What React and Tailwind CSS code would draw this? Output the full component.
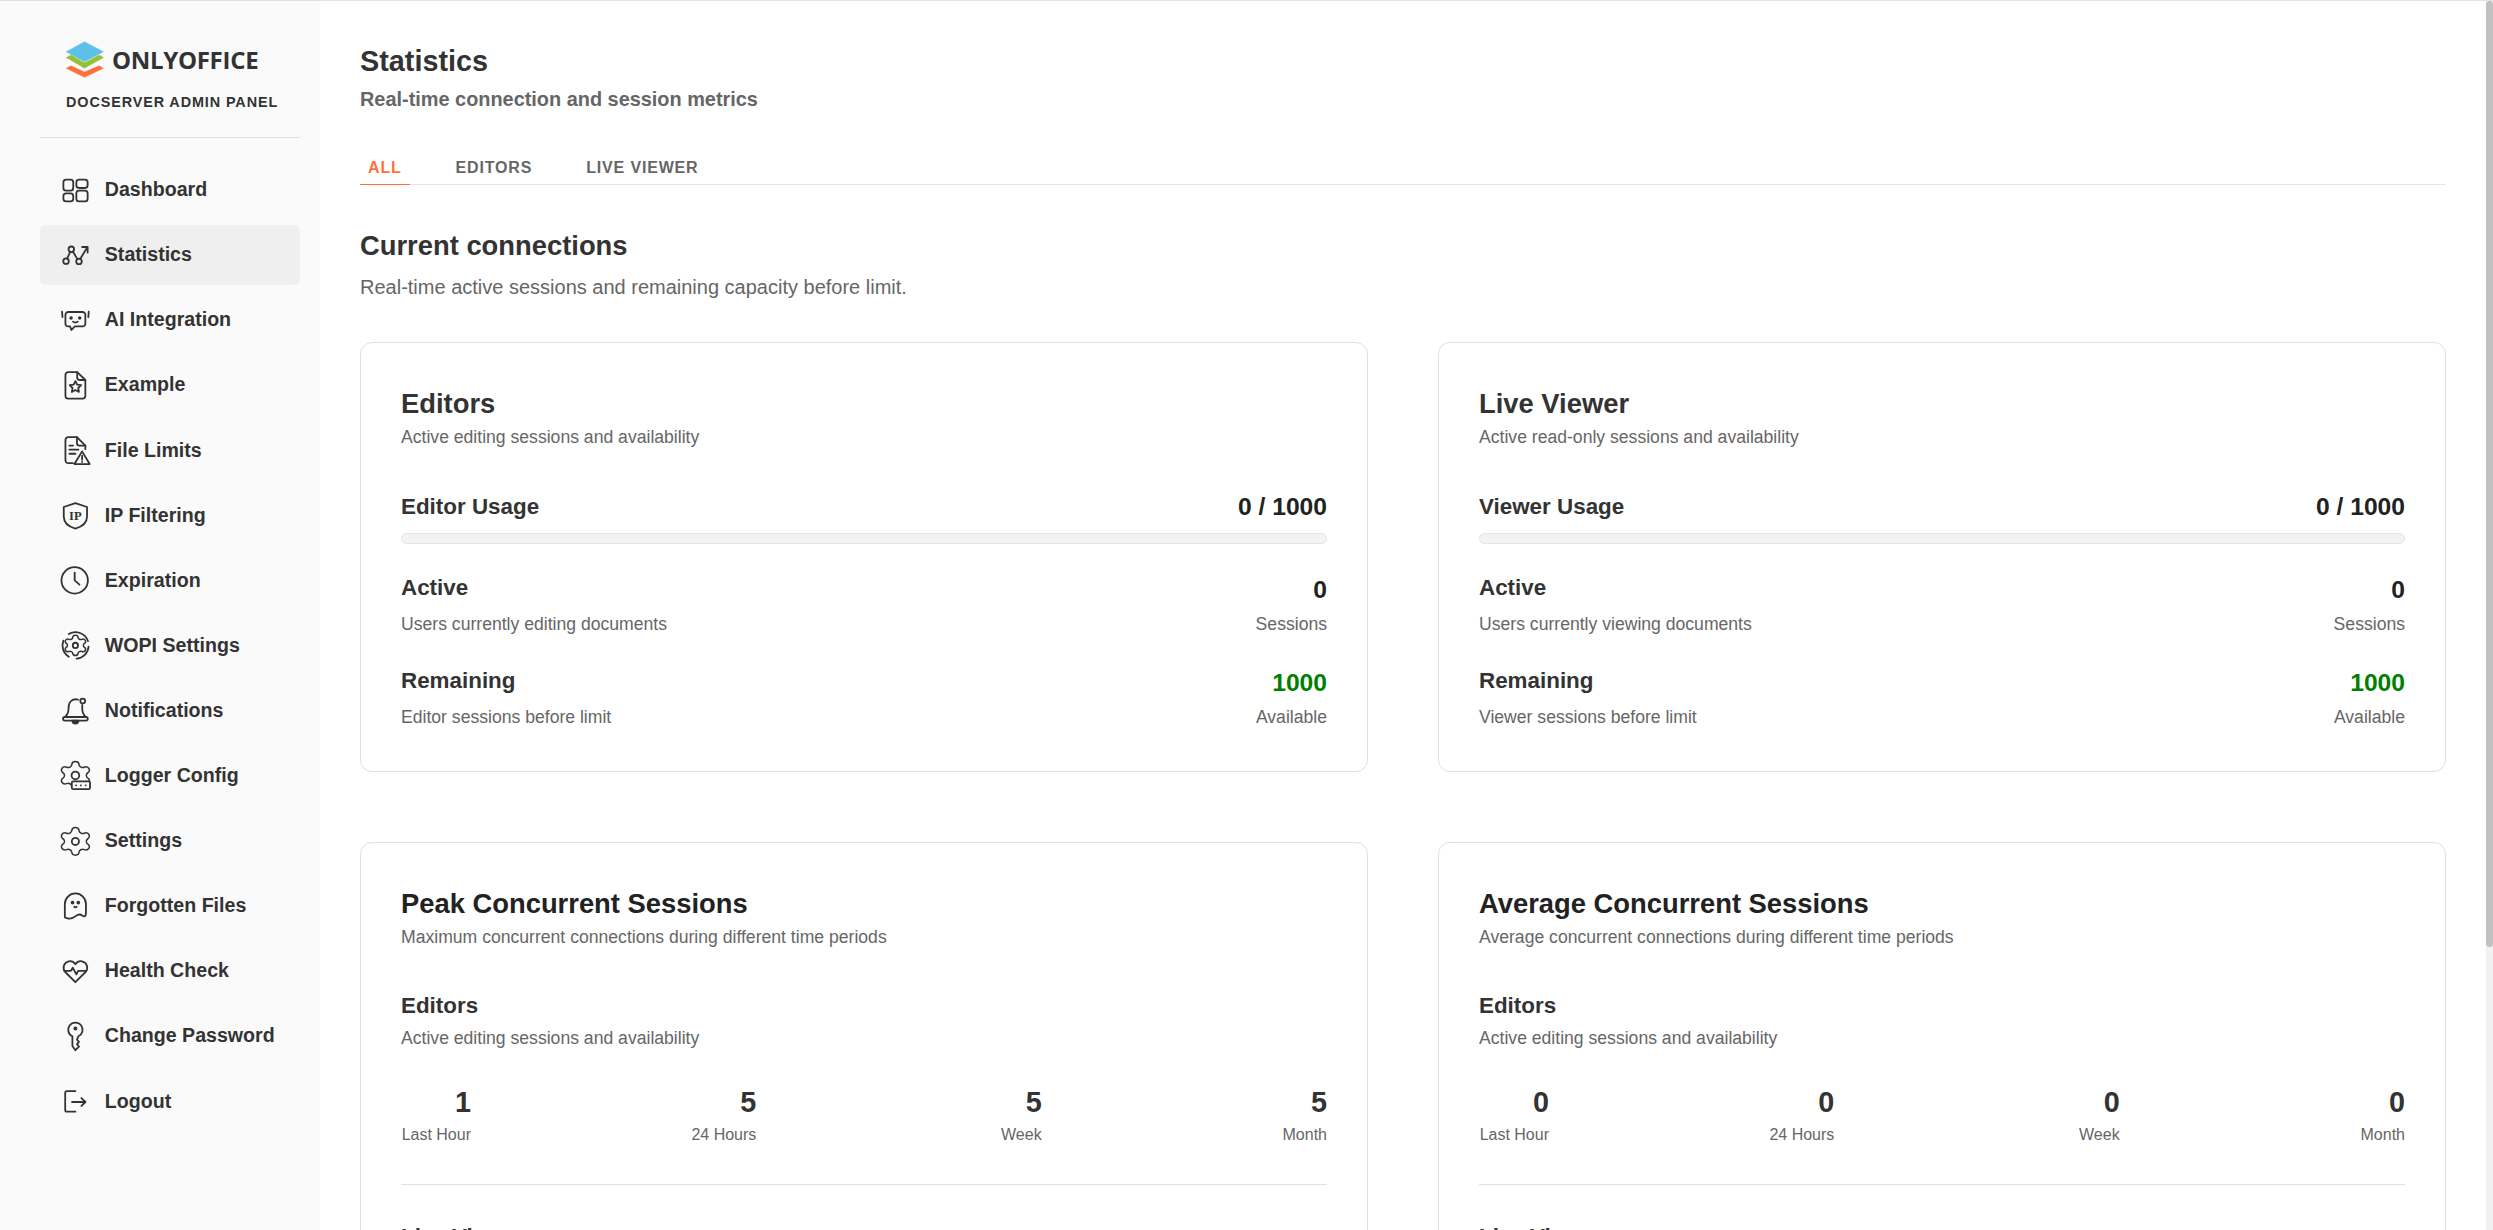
const Gear = ({ sx = 1.3, sy = 1.15, r = 3, children }) => (
    <>
        <g transform={`translate(12 12) scale(${sx} ${sy}) translate(-12 -12)`}>
            <path vectorEffect="non-scaling-stroke" d="M9.671 4.136a2.34 2.34 0 0 1 4.659 0 2.34 2.34 0 0 0 3.319 1.915 2.34 2.34 0 0 1 2.33 4.033 2.34 2.34 0 0 0 0 3.831 2.34 2.34 0 0 1-2.33 4.033 2.34 2.34 0 0 0-3.319 1.915 2.34 2.34 0 0 1-4.659 0 2.34 2.34 0 0 0-3.32-1.915 2.34 2.34 0 0 1-2.33-4.033 2.34 2.34 0 0 0 0-3.831A2.34 2.34 0 0 1 6.35 6.051a2.34 2.34 0 0 0 3.319-1.915" />
        </g>
        <circle cx="12" cy="12" r={r} />
        {children}
    </>
)

const icons = {
    dashboard: (
        <>
            <rect x="2" y="3" width="8.2" height="9.2" rx="2.2" />
            <rect x="12.8" y="3" width="9.4" height="7" rx="2.2" />
            <rect x="2" y="14.4" width="8.2" height="6.8" rx="2.2" />
            <rect x="12.8" y="12.2" width="9.4" height="9" rx="2.2" />
        </>
    ),
    statistics: (
        <>
            <circle cx="4.2" cy="16.8" r="2.3" />
            <circle cx="8.6" cy="6.9" r="2.3" />
            <circle cx="15" cy="17" r="2.3" />
            <path d="M5.1 14.7l2.6-5.7M9.9 8.8l3.8 6.3M16 15l5.8-9.6M17.6 5h4.6v4.6" />
        </>
    ),
    ai: (
        <>
            <path d="M6 5h12a2.3 2.3 0 0 1 2.3 2.3v7.4A2.3 2.3 0 0 1 18 17h-6.5l-2.8 3-1.2-3H6a2.3 2.3 0 0 1-2.3-2.3V7.3A2.3 2.3 0 0 1 6 5z" />
            <path d="M.9 4.8l.3 4.4M23.1 4.8l-.3 4.4M10 13q2 1.5 4 0" />
            <circle cx="8.4" cy="10" r=".7" fill="#333" />
            <circle cx="15.6" cy="10" r=".7" fill="#333" />
        </>
    ),
    example: (
        <>
            <path d="M13.5 1H6a2.3 2.3 0 0 0-2.3 2.3v17.4A2.3 2.3 0 0 0 6 23h12a2.3 2.3 0 0 0 2.3-2.3V7.5z" />
            <path d="M13.5 1v4.5a2 2 0 0 0 2 2h4.8" />
            <path d="M12 8.4l1.47 2.98 3.29.47-2.38 2.32.56 3.28L12 15.9l-2.94 1.55.56-3.28-2.38-2.32 3.29-.47z" />
        </>
    ),
    file: (
        <>
            <path d="M10 22.6H6a2.3 2.3 0 0 1-2.3-2.3v-17A2.3 2.3 0 0 1 6 1h7.3l7 7v3" />
            <path d="M13.3 1v5a2 2 0 0 0 2 2h5M7 8h3M7 11.4h7.5M7 14.8h5" />
            <path d="M17.6 12.8l6.3 10.6H11.2z" />
            <path d="M17.6 16.4v3.4M17.6 21.5v.2" />
        </>
    ),
    ip: (
        <>
            <path d="M12 1.7l9.7 3.3v8c0 5-4 8.5-9.7 10-5.7-1.5-9.7-5-9.7-10V5z" />
            <text x="12" y="15.8" textAnchor="middle" fontFamily="'Liberation Serif', serif" fontWeight="700" fontSize="10.5" fill="#333" stroke="none">IP</text>
        </>
    ),
    clock: (
        <>
            <circle cx="11.4" cy="12" r="11" />
            <path d="M11.4 5.5V12l4 3.5" />
        </>
    ),
    wopi: (
        <Gear sx={0.95} sy={0.85} r={2.2}>
            <path d="M6.5 2.5A11 11 0 0 1 22.5 8.5M23 13a11 11 0 0 1-10 10M6.5 21.5A11 11 0 0 1 2 8" />
        </Gear>
    ),
    bell: (
        <>
            <path d="M3.5 17.5c2-2 2.8-4 2.8-7V9.5c0-4 2.5-6.8 5.7-6.8.8 0 1.500.1 2.200.4M20.5 17.5c-2-2-2.8-4-2.8-7V7.5" />
            <rect x="1.7" y="17.5" width="20.6" height="3" rx="1.5" />
            <circle cx="18.1" cy="4.2" r="2" />
            <path d="M9.5 20.5h5a2.5 2.5 0 0 1-5 0z" fill="#333" />
        </>
    ),
    logger: (
        <>
            <Gear r={3.2} />
            <rect x="9" y="17" width="15.2" height="6.5" rx="1.2" fill="#fafafa" />
            <path d="M12.5 20.3h.1M16.5 20.3h.1M20.5 20.3h.1" />
        </>
    ),
    settings: <Gear />,
    ghost: (
        <>
            <path d="M3.2 21V10a8.8 8.8 0 0 1 17.6 0v8c0 2.2-1.6 2.8-3 1.7-1.8-1.4-3.3-1.4-5.3.2-2.5 2-4.5 2.7-7 2-1.5-.4-2.3-.2-2.3-.9z" />
            <circle cx="9.6" cy="8.8" r=".8" fill="#333" />
            <circle cx="14.4" cy="8.8" r=".8" fill="#333" />
            <path d="M11 12.3q1 .8 2 0" />
        </>
    ),
    health: (
        <>
            <path d="M12 21l-8.5-8.5C1 9.5 2 4.5 6.5 3.6 9 3.2 11 4.5 12 6c1-1.5 3-2.8 5.5-2.4 4.5.9 5.500 5.900 3 8.900z" />
            <path d="M2.8 11.5h5.5l1.5-2.5 3 5.5 1.5-3h6.8" />
        </>
    ),
    key: (
        <>
            <path d="M9.5 11.9V20l2.5 3.5 3-3-1.7-2 1.7-2-1.7-1.8 1.200-2.800A6 6 0 1 0 9.5 11.900z" />
            <circle cx="12" cy="5.5" r=".9" />
        </>
    ),
    logout: (
        <>
            <path d="M12 3.4H5a1.500 1.500 0 0 0-1.500 1.500v14.200A1.500 1.500 0 0 0 5 20.600h7" />
            <path d="M9.2 12.5h11M17 9.2l3.400 3.300-3.400 3.300" />
        </>
    ),
}

const navItems = [
    ["dashboard", "Dashboard"],
    ["statistics", "Statistics"],
    ["ai", "AI Integration"],
    ["example", "Example"],
    ["file", "File Limits"],
    ["ip", "IP Filtering"],
    ["clock", "Expiration"],
    ["wopi", "WOPI Settings"],
    ["bell", "Notifications"],
    ["logger", "Logger Config"],
    ["settings", "Settings"],
    ["ghost", "Forgotten Files"],
    ["health", "Health Check"],
    ["key", "Change Password"],
    ["logout", "Logout"],
]

const Logo = () => (
    <div className="flex items-center h-[40px] pl-[26px]">
        <svg width="38" height="37" viewBox="0 0 38 37" className="shrink-0">
            <path d="M.2 27.3l4.8-2.5 13.5 6.2L33 24.8l4.5 2.5-19 9z" fill="#ff6f3d" stroke="#ff6f3d" strokeWidth=".4" strokeLinejoin="round" />
            <path d="M.2 16.5L5 14l13.5 7.7L33 14l4.5 2.5-19 10.7z" fill="#95c038" stroke="#95c038" strokeWidth=".4" strokeLinejoin="round" />
            <path d="M18.5.7l19 10-19 10-18.300-10z" fill="#5dc0e8" stroke="#5dc0e8" strokeWidth=".4" strokeLinejoin="round" />
        </svg>
        <span className="ml-[8px] pt-[2px] text-[24px] leading-none font-bold tracking-[-0.3px] text-[#333] font-['Open_Sans',sans-serif]">ONLYOFFICE</span>
    </div>
)

const Sidebar = () => (
    <aside className="w-[320px] shrink-0 bg-[#fafafa] pl-[40px] pr-[20px] h-full">
        <div className="pt-[38px]">
            <Logo />
            <div className="mt-[13px] pl-[26px] text-[14.4px] leading-[20px] font-bold tracking-[0.9px] text-[#333] whitespace-nowrap">DOCSERVER ADMIN PANEL</div>
        </div>
        <div className="mt-[25px] h-px bg-[#e2e2e2]" />
        <nav className="mt-[22px] flex flex-col gap-[5.1px]">
            {navItems.map(([icon, label]) => (
                <div key={label} className={`flex items-center h-[60px] pl-[21px] rounded-[6px] ${label === "Statistics" ? "bg-[#efefef]" : ""}`}>
                    <svg width="28.8" height="28.8" viewBox="0 0 24 24" fill="none" stroke="#333" strokeWidth="1.5" strokeLinecap="round" strokeLinejoin="round" className="shrink-0 overflow-visible">
                        {icons[icon]}
                    </svg>
                    <span className="ml-[15px] text-[19.6px] leading-none font-bold text-[#333] whitespace-nowrap">{label}</span>
                </div>
            ))}
        </nav>
    </aside>
)

const Tabs = () => (
    <div className="mt-[36px] flex gap-[38px] border-b border-[#e4e4e4] h-[38px]">
        {["ALL", "EDITORS", "LIVE VIEWER"].map((tab, i) => (
            <div key={tab} className={`h-[38px] px-[8px] pt-[11px] text-[16px] leading-[20px] font-bold tracking-[0.83px] ${i === 0 ? "text-[#ff6f3d] border-b border-[#ff6f3d]" : "text-[#666]"}`}>
                {tab}
            </div>
        ))}
    </div>
)

const CapacityRow = ({ title, desc, value, unit, green }) => (
    <div className="flex justify-between">
        <div>
            <div className="text-[22.4px] leading-[28px] font-bold text-[#333]">{title}</div>
            <div className="mt-[11px] text-[17.6px] leading-[22px] text-[#666]">{desc}</div>
        </div>
        <div className="text-right">
            <div className={`text-[24.64px] leading-[28px] font-bold mt-[2px] ${green ? "text-[#008000]" : "text-[#222]"}`}>{value}</div>
            <div className="mt-[9px] text-[17.6px] leading-[22px] text-[#666]">{unit}</div>
        </div>
    </div>
)

const CapacityCard = ({ title, desc, usage, activeDesc, remainingDesc }) => (
    <div className="h-[430px] rounded-[12px] border border-[#e0e0e0] bg-white px-[40px] pt-[45px]">
        <h3 className="text-[27.36px] leading-[32px] font-bold text-[#333]">{title}</h3>
        <p className="mt-[6px] text-[17.6px] leading-[22px] text-[#666]">{desc}</p>
        <div className="mt-[45px] flex justify-between items-center h-[28px]">
            <span className="text-[22.4px] font-bold text-[#333]">{usage}</span>
            <span className="text-[24.64px] font-bold text-[#222]">0 / 1000</span>
        </div>
        <div className="mt-[12px] h-[11px] rounded-[6px] bg-[#f3f3f3] border border-[#e4e4e4]" />
        <div className="mt-[30px]">
            <CapacityRow title="Active" desc={activeDesc} value="0" unit="Sessions" />
        </div>
        <div className="mt-[32px]">
            <CapacityRow title="Remaining" desc={remainingDesc} value="1000" unit="Available" green />
        </div>
    </div>
)

const PeriodGroup = ({ title, desc, values }) => (
    <div>
        <div className="text-[22.4px] leading-[28px] font-bold text-[#333]">{title}</div>
        <div className="mt-[7px] text-[17.6px] leading-[22px] text-[#666]">{desc}</div>
        <div className="mt-[36px] flex justify-between">
            {["Last Hour", "24 Hours", "Week", "Month"].map((label, i) => (
                <div key={label} className="w-[70px] text-right whitespace-nowrap flex flex-col items-end">
                    <div className="text-[28.8px] leading-[34px] font-bold text-[#333]">{values[i]}</div>
                    <div className="mt-[6px] text-[16px] leading-[20px] text-[#666]">{label}</div>
                </div>
            ))}
        </div>
    </div>
)

const SessionsCard = ({ title, desc, editors, viewers }) => (
    <div className="rounded-[12px] border border-[#e0e0e0] bg-white px-[40px] pt-[44px]">
        <h3 className="text-[27.36px] leading-[34px] font-bold text-[#222]">{title}</h3>
        <p className="mt-[5px] text-[17.6px] leading-[22px] text-[#666]">{desc}</p>
        <div className="mt-[44px]">
            <PeriodGroup title="Editors" desc="Active editing sessions and availability" values={editors} />
        </div>
        <div className="mt-[39px] h-px bg-[#e0e0e0]" />
        <div className="mt-[38px] pb-[40px]">
            <PeriodGroup title="Live Viewer" desc="Active read-only sessions and availability" values={viewers} />
        </div>
    </div>
)

const Scrollbar = () => (
    <div className="w-[7px] shrink-0 bg-[#f1f1f1]">
        <div className="h-[946px] bg-[#c1c1c1] rounded-[4px]" />
    </div>
)

const App = () => {
    return (
        <div className="w-[2493px] h-[1230px] overflow-hidden flex flex-col bg-white font-['Liberation_Sans',Arial,sans-serif]">
            <div className="h-px shrink-0 bg-[#d8e5f1]" />
            <div className="flex flex-1 min-h-0">
                <Sidebar />
                <main className="flex-1 min-w-0 overflow-hidden px-[40px] pt-[41px]">
                    <h1 className="text-[28.8px] leading-[38px] font-bold text-[#333]">Statistics</h1>
                    <p className="text-[19.9px] leading-[24px] font-bold text-[#666] mt-[7px]">Real-time connection and session metrics</p>
                    <Tabs />
                    <h2 className="mt-[45px] text-[27.36px] leading-[32px] font-bold text-[#333]">Current connections</h2>
                    <p className="mt-[12px] text-[20px] leading-[26px] text-[#666]">Real-time active sessions and remaining capacity before limit.</p>
                    <div className="mt-[42px] grid grid-cols-2 gap-[70px]">
                        <CapacityCard title="Editors" desc="Active editing sessions and availability" usage="Editor Usage" activeDesc="Users currently editing documents" remainingDesc="Editor sessions before limit" />
                        <CapacityCard title="Live Viewer" desc="Active read-only sessions and availability" usage="Viewer Usage" activeDesc="Users currently viewing documents" remainingDesc="Viewer sessions before limit" />
                        <SessionsCard title="Peak Concurrent Sessions" desc="Maximum concurrent connections during different time periods" editors={[1, 5, 5, 5]} viewers={[0, 0, 0, 0]} />
                        <SessionsCard title="Average Concurrent Sessions" desc="Average concurrent connections during different time periods" editors={[0, 0, 0, 0]} viewers={[0, 0, 0, 0]} />
                    </div>
                </main>
                <Scrollbar />
            </div>
        </div>
    )
}

export default App
